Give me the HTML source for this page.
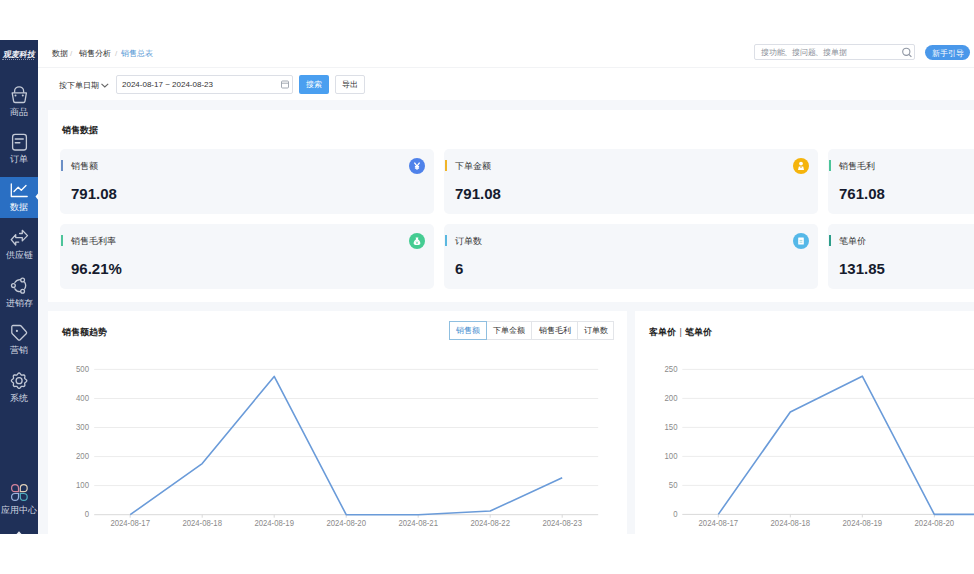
<!DOCTYPE html>
<html><head><meta charset="utf-8">
<style>
*{margin:0;padding:0;box-sizing:border-box}
html,body{width:974px;height:574px;overflow:hidden;background:#fff;font-family:"Liberation Sans",sans-serif;color:#333}
.abs{position:absolute}
#side{left:0;top:40px;width:38px;height:494px;background:#1f3058}
#act{left:0;top:177px;width:38px;height:41px;background:#2a6fc3}
.lb{position:absolute;left:0;width:38px;text-align:center;color:#d3d8e2;font-size:9px;line-height:9px;white-space:nowrap;font-weight:500}
#main{left:38px;top:40px;width:936px;height:494px;background:#f5f7fa;overflow:hidden}
#hdr{left:0;top:0;width:936px;height:28px;background:#fff;border-bottom:1px solid #f2f3f5}
#flt{left:0;top:28px;width:936px;height:32px;background:#fff}
.t8{position:absolute;font-size:8px;line-height:8px;white-space:nowrap;font-weight:500}
.panel{position:absolute;background:#fff}
.card{position:absolute;width:374px;height:65px;background:#f5f7fa;border-radius:5px}
.card .bar{position:absolute;left:0.5px;top:11px;width:2.2px;height:11px}
.card .lbl{position:absolute;left:11px;top:13px;font-size:9px;line-height:9px;color:#333;white-space:nowrap;font-weight:500}
.card .num{position:absolute;left:11px;top:37px;font-size:15px;line-height:15px;font-weight:bold;color:#151b2e;white-space:nowrap}
.card .ic{position:absolute;left:349px;top:9px;width:16px;height:16px;border-radius:50%}
.ttl{position:absolute;font-size:9px;line-height:10px;font-weight:bold;color:#222;white-space:nowrap}
.btn{position:absolute;font-size:8px;line-height:17px;text-align:center;white-space:nowrap;font-weight:500}
.tab{position:absolute;top:0;height:19px;font-size:8px;line-height:17px;text-align:center;border:1px solid #e3e5e9;color:#333;background:#fff;white-space:nowrap;font-weight:500}
svg text.ax{font-family:"Liberation Sans",sans-serif;font-size:8.8px;fill:#8a8a8a}
#ov{position:absolute;left:0;top:0}
</style></head><body>
<div id="side" class="abs"></div>
<div id="act" class="abs"></div>
<div class="abs" style="left:3px;top:50px;width:33px;font-size:8px;line-height:9px;font-weight:bold;color:#eef1f6;white-space:nowrap;transform:skewX(-10deg);letter-spacing:0px">观麦科技</div>
<div class="abs" style="left:2px;top:59px;width:32px;height:1px;border-top:1px dotted #8a94b0"></div>
<div class="lb" style="top:108px">商品</div>
<div class="lb" style="top:155px">订单</div>
<div class="lb" style="top:203px;color:#fff">数据</div>
<div class="lb" style="top:251px">供应链</div>
<div class="lb" style="top:299px">进销存</div>
<div class="lb" style="top:346px">营销</div>
<div class="lb" style="top:394px">系统</div>
<div class="lb" style="top:506px">应用中心</div>

<div id="main" class="abs">
  <div id="hdr" class="abs">
    <div class="t8" style="left:14px;top:10px;color:#333">数据</div>
    <div class="t8" style="left:32px;top:10px;color:#c8c8c8">/</div>
    <div class="t8" style="left:41px;top:10px;color:#333">销售分析</div>
    <div class="t8" style="left:77px;top:10px;color:#c8c8c8">/</div>
    <div class="t8" style="left:83px;top:10px;color:#5a9ad6">销售总表</div>
    <div class="abs" style="left:716px;top:4px;width:161px;height:16px;border:1px solid #dcdfe6;border-radius:2px;background:#fff"></div>
    <div class="t8" style="left:723px;top:9px;color:#8a8f99;letter-spacing:-0.25px">搜功能、搜问题、搜单据</div>
    <div class="abs" style="left:887px;top:4.5px;width:45px;height:15px;border-radius:8px;background:#4a98ea"></div>
    <div class="t8" style="left:887px;top:9.5px;width:45px;text-align:center;color:#fff">新手引导</div>
  </div>
  <div id="flt" class="abs">
    <div class="t8" style="left:21px;top:14px;color:#333">按下单日期</div>
    <div class="abs" style="left:78px;top:7px;width:177px;height:19px;border:1px solid #dcdfe6;border-radius:2px;background:#fff"></div>
    <div class="t8" style="left:84px;top:13px;color:#333">2024-08-17 ~ 2024-08-23</div>
    <div class="btn" style="left:261px;top:7px;width:30px;height:19px;background:#4a9ff0;color:#fff;border-radius:2px;line-height:19px">搜索</div>
    <div class="btn" style="left:297px;top:7px;width:30px;height:19px;border:1px solid #dcdfe6;color:#333;border-radius:2px">导出</div>
  </div>
  <div class="panel" style="left:10px;top:70px;width:940px;height:192px">
    <div class="ttl" style="left:14px;top:15px">销售数据</div>
    <div class="card" style="left:12px;top:39px"><div class="bar" style="background:#6b8fc6"></div><div class="lbl">销售额</div><div class="num">791.08</div><div class="ic" style="background:#4f82ea"><svg width="16" height="16" viewBox="0 0 16 16"><path d="M5.4,4.6 L8,8.2 L10.6,4.6 M8,8.2 V11.8 M5.9,8.6 H10.1 M5.9,10.1 H10.1" fill="none" stroke="#fff" stroke-width="1.3"/></svg></div></div>
    <div class="card" style="left:396px;top:39px"><div class="bar" style="background:#f0b429"></div><div class="lbl">下单金额</div><div class="num">791.08</div><div class="ic" style="background:#f5b40c"><svg width="16" height="16" viewBox="0 0 16 16"><circle cx="8" cy="5.6" r="1.9" fill="#fff"/><path d="M5,11.9 L5.8,8.4 H10.2 L11,11.9 Z" fill="#fff"/><path d="M7.4,8.5 L8,9.9 L8.6,8.5" fill="none" stroke="#e0a010" stroke-width="0.6"/></svg></div></div>
    <div class="card" style="left:780px;top:39px"><div class="bar" style="background:#4cc49a"></div><div class="lbl">销售毛利</div><div class="num">761.08</div></div>
    <div class="card" style="left:12px;top:114px"><div class="bar" style="background:#4cc49a"></div><div class="lbl">销售毛利率</div><div class="num">96.21%</div><div class="ic" style="background:#45cc92"><svg width="16" height="16" viewBox="0 0 16 16"><path d="M6.6,4.4 H9.4 L8.9,6.2 C10.8,7.3 11.6,9.4 11.3,10.8 C11.1,11.6 10.4,11.9 9.6,11.9 H6.4 C5.6,11.9 4.9,11.6 4.7,10.8 C4.4,9.4 5.2,7.3 7.1,6.2 Z" fill="#fff"/><path d="M7.1,8.6 L8,9.6 L8.9,8.6 M8,9.6 V11 M7.2,10.1 H8.8" fill="none" stroke="#45cc92" stroke-width="0.6"/></svg></div></div>
    <div class="card" style="left:396px;top:114px"><div class="bar" style="background:#5bb8e0"></div><div class="lbl">订单数</div><div class="num">6</div><div class="ic" style="background:#55b8e8"><svg width="16" height="16" viewBox="0 0 16 16"><rect x="5.2" y="4.6" width="5.6" height="7" rx="0.5" fill="#fff"/><path d="M6.6,7.4 H9.4 M6.6,9.2 H9.4" stroke="#7fc6c8" stroke-width="0.7"/></svg></div></div>
    <div class="card" style="left:780px;top:114px"><div class="bar" style="background:#2e9e8a"></div><div class="lbl">笔单价</div><div class="num">131.85</div></div>
  </div>
  <div class="panel" style="left:10px;top:271px;width:579px;height:240px">
    <div class="ttl" style="left:14px;top:16px">销售额趋势</div>
    <div class="abs" style="left:401px;top:10px;width:165px;height:19px">
      <div class="tab" style="left:0;width:38px;border-color:#8fbfe0;color:#4a90d0;z-index:2">销售额</div>
      <div class="tab" style="left:37px;width:46px">下单金额</div>
      <div class="tab" style="left:82px;width:47px">销售毛利</div>
      <div class="tab" style="left:128px;width:37px">订单数</div>
    </div>
  </div>
  <div class="panel" style="left:597px;top:271px;width:400px;height:240px">
    <div class="ttl" style="left:14px;top:16px">客单价 <span style="font-weight:normal;color:#555;padding:0 1px">|</span> 笔单价</div>
  </div>
</div>

<svg id="ov" width="974" height="534" viewBox="0 0 974 534">
 <g fill="none" stroke="#c3c9d6" stroke-width="1.3" stroke-linecap="round" stroke-linejoin="round">
  <path d="M14.6,92.2 V91 a4.5,4.2 0 0 1 9,0 V92.2"/>
  <path d="M12.2,92.9 H26.4 L25,101.2 a1.5,1.5 0 0 1 -1.5,1.3 H15.1 a1.5,1.5 0 0 1 -1.5,-1.3 Z"/>
  <rect x="12.6" y="134.4" width="13.8" height="15.6" rx="2.5"/>
  <path d="M15.3,139 H23.2 M15.3,142.8 H19.8" stroke-width="1.5"/>
  <path d="M11.3,184 V196.5 H27.2 M14,191.5 L18.2,187.2 L21.3,190.3 L26,185.5" stroke="#fff"/>
  <path d="M19.6,233.5 H22.3 V230.3 L27.5,235.6 L22.3,240.9 V237.6 H15.7 V234.6 L11.2,239.7 L15.7,245 V242.1 H18.7"/>
  <path d="M14.9,282.5 A6.3,6.3 0 0 1 20.5,279.6 M24.6,282.2 A6.3,6.3 0 0 1 24.6,289 M20.5,291.7 A6.3,6.3 0 0 1 14.9,288.8"/>
  <circle cx="13.4" cy="285.6" r="1.9"/><circle cx="22.6" cy="280" r="1.9"/><circle cx="22.6" cy="291.2" r="1.9"/>
  <path d="M11.8,326.8 a1.2,1.2 0 0 1 1.2,-1.3 H20 a1.6,1.6 0 0 1 1.1,0.5 L26.2,331.8 a1.4,1.4 0 0 1 0,2 L20.2,339.7 a1.4,1.4 0 0 1 -2,0 L12.3,333.7 a1.6,1.6 0 0 1 -0.5,-1.1 Z"/>
  <path d="M26.8,380.7 L26.7,381.2 L26.3,381.7 L25.9,382.0 L25.4,382.4 L25.0,382.7 L24.7,383.0 L24.7,383.4 L24.7,383.9 L24.8,384.5 L24.9,385.1 L24.8,385.7 L24.5,386.1 L24.1,386.4 L23.5,386.5 L22.9,386.4 L22.4,386.3 L21.8,386.3 L21.4,386.3 L21.1,386.6 L20.8,387.0 L20.4,387.5 L20.1,387.9 L19.6,388.3 L19.1,388.4 L18.6,388.3 L18.1,387.9 L17.8,387.5 L17.4,387.0 L17.1,386.6 L16.8,386.3 L16.4,386.3 L15.9,386.3 L15.3,386.4 L14.7,386.5 L14.1,386.4 L13.7,386.1 L13.4,385.7 L13.3,385.1 L13.4,384.5 L13.5,383.9 L13.5,383.4 L13.5,383.0 L13.2,382.7 L12.8,382.4 L12.3,382.0 L11.9,381.7 L11.5,381.2 L11.4,380.7 L11.5,380.2 L11.9,379.7 L12.3,379.4 L12.8,379.0 L13.2,378.7 L13.5,378.4 L13.5,378.0 L13.5,377.4 L13.4,376.9 L13.3,376.3 L13.4,375.7 L13.7,375.3 L14.1,375.0 L14.7,374.9 L15.3,375.0 L15.8,375.1 L16.4,375.1 L16.8,375.1 L17.1,374.8 L17.4,374.4 L17.8,373.9 L18.1,373.5 L18.6,373.1 L19.1,373.0 L19.6,373.1 L20.1,373.5 L20.4,373.9 L20.8,374.4 L21.1,374.8 L21.4,375.1 L21.8,375.1 L22.4,375.1 L22.9,375.0 L23.5,374.9 L24.1,375.0 L24.5,375.3 L24.8,375.7 L24.9,376.3 L24.8,376.9 L24.7,377.4 L24.7,378.0 L24.7,378.4 L25.0,378.7 L25.4,379.0 L25.9,379.4 L26.3,379.7 L26.7,380.2Z"/>
  <circle cx="19.1" cy="380.7" r="3"/>
 </g>
 <circle cx="16.9" cy="330.9" r="1.1" fill="#c3c9d6"/>
 <circle cx="15.5" cy="95.6" r="1" fill="#c3c9d6"/><circle cx="22.8" cy="95.6" r="1" fill="#c3c9d6"/>
 <path d="M38.2,193.3 L35.5,196.6 L38.2,199.9 Z" fill="#fff"/>
 <path d="M16.5,534 L19,531.3 L21.5,534 Z" fill="#e8ebf2"/>
 <g fill="none" stroke-width="1.2">
  <path d="M18.5,491.6 H15.05 A3.45,3.45 0 1 1 18.5,488.15 Z" stroke="#d4849c"/>
  <path d="M20.3,491.6 H23.75 A3.45,3.45 0 1 0 20.3,488.15 Z" stroke="#e0d0b8"/>
  <path d="M18.5,493.5 H15.05 A3.45,3.45 0 1 0 18.5,496.95 Z" stroke="#9ab4e0"/>
  <path d="M20.3,493.5 H23.75 A3.45,3.45 0 1 1 20.3,496.95 Z" stroke="#4fb0c0"/>
 </g>
 <g fill="none" stroke="#8f96a3" stroke-width="1.1">
  <circle cx="906.3" cy="51.8" r="3.6"/><path d="M909,54.5 L911.4,56.9"/>
  <path d="M101.5,83.8 L104.8,87 L108.2,83.8" stroke="#666"/>
  <rect x="281.5" y="81" width="7" height="7" rx="1" stroke="#9aa0aa" stroke-width="0.9"/>
  <path d="M281.5,83.2 H288.5" stroke="#9aa0aa" stroke-width="0.9"/>
 </g>
 <line x1="94.2" y1="514.7" x2="598.2" y2="514.7" stroke="#d9d9d9" stroke-width="1"/>
<text x="89" y="517.2" text-anchor="end" class="ax" textLength="4.3" lengthAdjust="spacingAndGlyphs">0</text>
<line x1="94.2" y1="485.6" x2="598.2" y2="485.6" stroke="#ececec" stroke-width="1"/>
<text x="89" y="488.1" text-anchor="end" class="ax" textLength="13.0" lengthAdjust="spacingAndGlyphs">100</text>
<line x1="94.2" y1="456.6" x2="598.2" y2="456.6" stroke="#ececec" stroke-width="1"/>
<text x="89" y="459.1" text-anchor="end" class="ax" textLength="13.0" lengthAdjust="spacingAndGlyphs">200</text>
<line x1="94.2" y1="427.5" x2="598.2" y2="427.5" stroke="#ececec" stroke-width="1"/>
<text x="89" y="430.0" text-anchor="end" class="ax" textLength="13.0" lengthAdjust="spacingAndGlyphs">300</text>
<line x1="94.2" y1="398.5" x2="598.2" y2="398.5" stroke="#ececec" stroke-width="1"/>
<text x="89" y="401.0" text-anchor="end" class="ax" textLength="13.0" lengthAdjust="spacingAndGlyphs">400</text>
<line x1="94.2" y1="369.4" x2="598.2" y2="369.4" stroke="#ececec" stroke-width="1"/>
<text x="89" y="371.9" text-anchor="end" class="ax" textLength="13.0" lengthAdjust="spacingAndGlyphs">500</text>
<line x1="130.2" y1="514.7" x2="130.2" y2="517.7" stroke="#d9d9d9" stroke-width="1"/>
<text x="130.2" y="526.3" text-anchor="middle" class="ax" textLength="39.5" lengthAdjust="spacingAndGlyphs">2024-08-17</text>
<line x1="202.2" y1="514.7" x2="202.2" y2="517.7" stroke="#d9d9d9" stroke-width="1"/>
<text x="202.2" y="526.3" text-anchor="middle" class="ax" textLength="39.5" lengthAdjust="spacingAndGlyphs">2024-08-18</text>
<line x1="274.2" y1="514.7" x2="274.2" y2="517.7" stroke="#d9d9d9" stroke-width="1"/>
<text x="274.2" y="526.3" text-anchor="middle" class="ax" textLength="39.5" lengthAdjust="spacingAndGlyphs">2024-08-19</text>
<line x1="346.2" y1="514.7" x2="346.2" y2="517.7" stroke="#d9d9d9" stroke-width="1"/>
<text x="346.2" y="526.3" text-anchor="middle" class="ax" textLength="39.5" lengthAdjust="spacingAndGlyphs">2024-08-20</text>
<line x1="418.2" y1="514.7" x2="418.2" y2="517.7" stroke="#d9d9d9" stroke-width="1"/>
<text x="418.2" y="526.3" text-anchor="middle" class="ax" textLength="39.5" lengthAdjust="spacingAndGlyphs">2024-08-21</text>
<line x1="490.2" y1="514.7" x2="490.2" y2="517.7" stroke="#d9d9d9" stroke-width="1"/>
<text x="490.2" y="526.3" text-anchor="middle" class="ax" textLength="39.5" lengthAdjust="spacingAndGlyphs">2024-08-22</text>
<line x1="562.2" y1="514.7" x2="562.2" y2="517.7" stroke="#d9d9d9" stroke-width="1"/>
<text x="562.2" y="526.3" text-anchor="middle" class="ax" textLength="39.5" lengthAdjust="spacingAndGlyphs">2024-08-23</text>
<polyline points="130.2,514.7 202.2,463.6 274.2,376.4 346.2,514.7 418.2,514.7 490.2,511.0 562.2,477.8" fill="none" stroke="#6a9bd9" stroke-width="1.6" stroke-linejoin="round"/>
 <line x1="682.3" y1="514.4" x2="1186.3" y2="514.4" stroke="#d9d9d9" stroke-width="1"/>
<text x="677.5" y="516.9" text-anchor="end" class="ax" textLength="4.3" lengthAdjust="spacingAndGlyphs">0</text>
<line x1="682.3" y1="485.4" x2="1186.3" y2="485.4" stroke="#ececec" stroke-width="1"/>
<text x="677.5" y="487.9" text-anchor="end" class="ax" textLength="8.7" lengthAdjust="spacingAndGlyphs">50</text>
<line x1="682.3" y1="456.4" x2="1186.3" y2="456.4" stroke="#ececec" stroke-width="1"/>
<text x="677.5" y="458.9" text-anchor="end" class="ax" textLength="13.0" lengthAdjust="spacingAndGlyphs">100</text>
<line x1="682.3" y1="427.4" x2="1186.3" y2="427.4" stroke="#ececec" stroke-width="1"/>
<text x="677.5" y="429.9" text-anchor="end" class="ax" textLength="13.0" lengthAdjust="spacingAndGlyphs">150</text>
<line x1="682.3" y1="398.4" x2="1186.3" y2="398.4" stroke="#ececec" stroke-width="1"/>
<text x="677.5" y="400.9" text-anchor="end" class="ax" textLength="13.0" lengthAdjust="spacingAndGlyphs">200</text>
<line x1="682.3" y1="369.4" x2="1186.3" y2="369.4" stroke="#ececec" stroke-width="1"/>
<text x="677.5" y="371.9" text-anchor="end" class="ax" textLength="13.0" lengthAdjust="spacingAndGlyphs">250</text>
<line x1="718.3" y1="514.4" x2="718.3" y2="517.4" stroke="#d9d9d9" stroke-width="1"/>
<text x="718.3" y="526.0" text-anchor="middle" class="ax" textLength="39.5" lengthAdjust="spacingAndGlyphs">2024-08-17</text>
<line x1="790.3" y1="514.4" x2="790.3" y2="517.4" stroke="#d9d9d9" stroke-width="1"/>
<text x="790.3" y="526.0" text-anchor="middle" class="ax" textLength="39.5" lengthAdjust="spacingAndGlyphs">2024-08-18</text>
<line x1="862.3" y1="514.4" x2="862.3" y2="517.4" stroke="#d9d9d9" stroke-width="1"/>
<text x="862.3" y="526.0" text-anchor="middle" class="ax" textLength="39.5" lengthAdjust="spacingAndGlyphs">2024-08-19</text>
<line x1="934.3" y1="514.4" x2="934.3" y2="517.4" stroke="#d9d9d9" stroke-width="1"/>
<text x="934.3" y="526.0" text-anchor="middle" class="ax" textLength="39.5" lengthAdjust="spacingAndGlyphs">2024-08-20</text>
<line x1="1006.3" y1="514.4" x2="1006.3" y2="517.4" stroke="#d9d9d9" stroke-width="1"/>
<text x="1006.3" y="526.0" text-anchor="middle" class="ax" textLength="39.5" lengthAdjust="spacingAndGlyphs">2024-08-21</text>
<line x1="1078.3" y1="514.4" x2="1078.3" y2="517.4" stroke="#d9d9d9" stroke-width="1"/>
<text x="1078.3" y="526.0" text-anchor="middle" class="ax" textLength="39.5" lengthAdjust="spacingAndGlyphs">2024-08-22</text>
<line x1="1150.3" y1="514.4" x2="1150.3" y2="517.4" stroke="#d9d9d9" stroke-width="1"/>
<text x="1150.3" y="526.0" text-anchor="middle" class="ax" textLength="39.5" lengthAdjust="spacingAndGlyphs">2024-08-23</text>
<polyline points="718.3,514.4 790.3,412.0 862.3,376.2 934.3,514.4 1006.3,514.4 1078.3,514.4 1150.3,514.4" fill="none" stroke="#6a9bd9" stroke-width="1.6" stroke-linejoin="round"/>
</svg>
</body></html>
